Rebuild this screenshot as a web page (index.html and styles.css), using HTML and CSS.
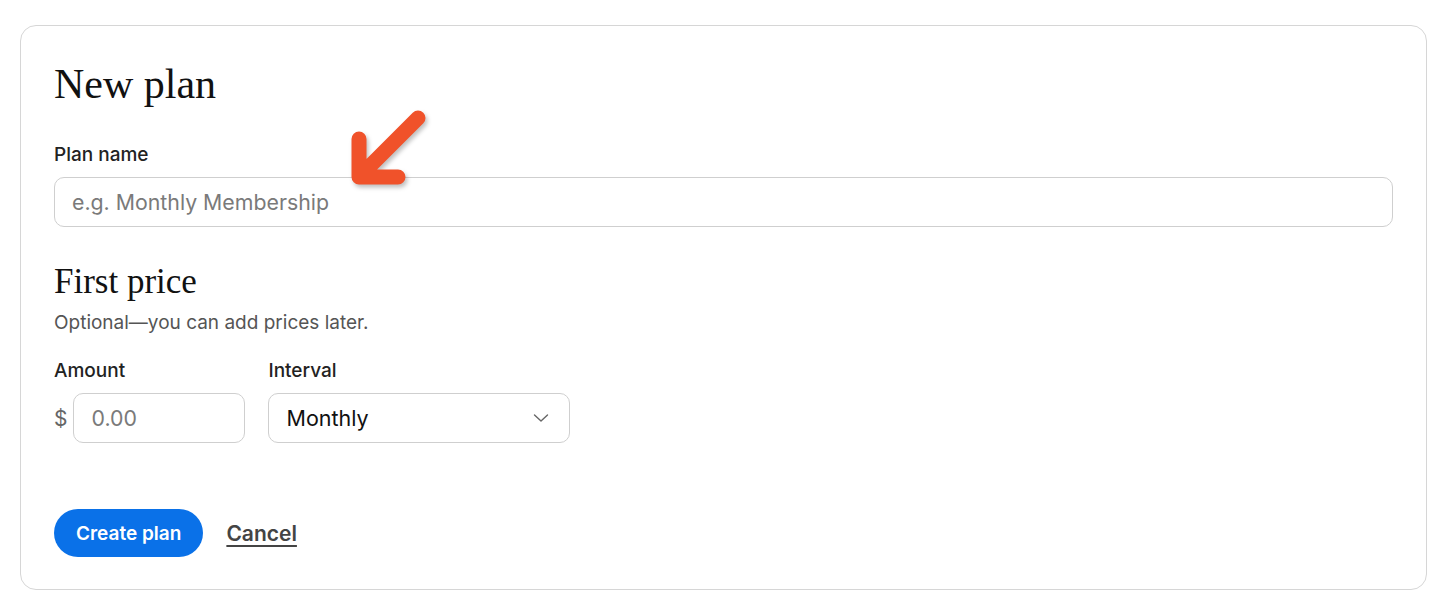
FILE: index.html
```html
<!DOCTYPE html>
<html lang="en">
<head>
<meta charset="utf-8">
<title>New plan</title>
<link rel="stylesheet" href="styles.css">
</head>
<body>
<main class="card">
  <h1 class="title">New plan</h1>
  <div class="field">
    <label class="label" for="plan-name">Plan name</label>
    <input class="input" id="plan-name" type="text" placeholder="e.g. Monthly Membership">
  </div>
  <h2 class="subtitle">First price</h2>
  <p class="hint">Optional—you can add prices later.</p>
  <div class="price-row">
    <div class="field">
      <label class="label" for="amount">Amount</label>
      <div class="money">
        <span class="currency">$</span>
        <input class="input amount" id="amount" type="text" placeholder="0.00">
      </div>
    </div>
    <div class="field">
      <label class="label">Interval</label>
      <div class="select">
        <span class="select-value">Monthly</span>
        <svg class="chevron" width="16" height="10" viewBox="0 0 16 10"><path d="M1.5 2 L8 8 L14.5 2" fill="none" stroke="#666" stroke-width="1.4" stroke-linecap="round" stroke-linejoin="round"/></svg>
      </div>
    </div>
  </div>
  <div class="actions">
    <button class="btn-primary" type="button">Create plan</button>
    <a class="link" href="#">Cancel</a>
  </div>
</main>
<svg class="arrow" width="100" height="100" viewBox="0 0 100 100">
  <path d="M19 39 V77 H58 M19 77 L78 18" fill="none" stroke="#f0522a" stroke-width="15" stroke-linecap="round" stroke-linejoin="round"/>
</svg>
</body>
</html>
```
FILE: styles.css
```css
html, body {
  margin: 0;
  padding: 0;
  background: #ffffff;
}
body {
  position: relative;
  padding: 25px 13px 12px 20px;
  font-family: Inter, "Noto Sans", sans-serif;
  color: #222;
}
.card {
  border: 1px solid #d6d6d6;
  border-radius: 16px;
  padding: 33px 33px 32px 33px;
}
.title {
  margin: 0;
  font-family: "Liberation Serif", "DejaVu Serif", serif;
  font-weight: 400;
  font-size: 42px;
  line-height: 50px;
  color: #111;
}
.field {
  display: flex;
  flex-direction: column;
  gap: 12px;
}
.title + .field {
  margin-top: 36px;
}
.label {
  font-size: 19px;
  line-height: 20px;
  font-weight: 500;
  color: #222;
}
.input {
  box-sizing: border-box;
  height: 50px;
  border: 1px solid #cfcfcf;
  border-radius: 10px;
  padding: 0 17px;
  font-family: Inter, "Noto Sans", sans-serif;
  font-size: 21.3px;
  color: #222;
  background: #fff;
  outline: none;
  margin: 0;
}
.input::placeholder {
  color: #7a7a7a;
}
.subtitle {
  margin: 35px 0 0 0;
  font-family: "Liberation Serif", "DejaVu Serif", serif;
  font-weight: 400;
  font-size: 35px;
  line-height: 40px;
  color: #111;
}
.hint {
  margin: 11px 0 0 0;
  font-size: 19px;
  line-height: 20px;
  color: #555;
}
.price-row {
  margin-top: 28px;
  display: flex;
  gap: 23px;
}
.money {
  display: flex;
  align-items: center;
  gap: 6px;
}
.currency {
  font-size: 21px;
  color: #666;
}
.amount {
  width: 172px;
}
.select {
  box-sizing: border-box;
  width: 302px;
  height: 50px;
  border: 1px solid #cfcfcf;
  border-radius: 10px;
  padding: 0 20px 0 17px;
  display: flex;
  align-items: center;
  justify-content: space-between;
  font-size: 21.5px;
  color: #111;
}
.actions {
  margin-top: 66px;
  display: flex;
  align-items: center;
  gap: 23px;
}
.btn-primary {
  height: 48px;
  padding: 0 22px;
  border: none;
  border-radius: 24px;
  background: #0a71e8;
  color: #fff;
  font-family: Inter, "Noto Sans", sans-serif;
  font-size: 19px;
  font-weight: 600;
}
.link {
  font-size: 21px;
  font-weight: 600;
  color: #444;
  text-decoration: underline;
  text-underline-offset: 4px;
  text-decoration-thickness: 2px;
}
.arrow {
  position: absolute;
  left: 340px;
  top: 100px;
  filter: drop-shadow(2px 3px 2px rgba(0, 0, 0, 0.25));
}
```
